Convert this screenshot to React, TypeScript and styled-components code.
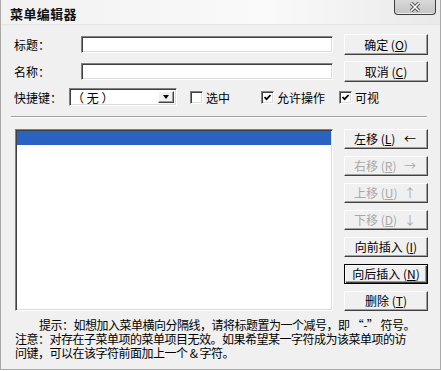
import React from "react"
import styled, { createGlobalStyle, css } from "styled-components"

const GlobalStyle = createGlobalStyle`
  html, body {
    margin: 0;
    padding: 0;
    background: #fff;
  }
  body {
    font-family: "Noto Sans CJK SC", "Liberation Sans", sans-serif;
    font-size: 12px;
    color: #000;
  }
`

export default function App() {
  return (
    <>
      <GlobalStyle />
      <Window>
        <TitleBar>
          <Title>菜单编辑器</Title>
          <CloseButton>
            <svg width="14" height="10" viewBox="0 0 14 10">
              <path d="M3 1 L11 9 M11 1 L3 9" stroke="#4a4a4a" strokeWidth="3.4" />
              <path d="M3 1 L11 9 M11 1 L3 9" stroke="#fff" strokeWidth="1.6" />
            </svg>
          </CloseButton>
        </TitleBar>

        <Client>
          <TopGrid>
            <FieldRow>
              <FieldLabel>标题：</FieldLabel>
              <TextInput />
            </FieldRow>
            <TopButton>
              确定 (<u>O</u>)
            </TopButton>

            <FieldRow>
              <FieldLabel>名称：</FieldLabel>
              <TextInput />
            </FieldRow>
            <TopButton>
              取消 (<u>C</u>)
            </TopButton>

            <OptionRow>
              <ShortcutLabel>快捷键：</ShortcutLabel>
              <Select>
                <SelectValue>（ 无 ）</SelectValue>
                <DropButton>
                  <Triangle />
                </DropButton>
              </Select>
              <CheckItem $w={71}>
                <CheckBox />
                <span>选中</span>
              </CheckItem>
              <CheckItem $w={78}>
                <CheckBox>
                  <CheckMark />
                </CheckBox>
                <span>允许操作</span>
              </CheckItem>
              <CheckItem>
                <CheckBox>
                  <CheckMark />
                </CheckBox>
                <span>可视</span>
              </CheckItem>
            </OptionRow>
          </TopGrid>

          <Separator />

          <MainGrid>
            <ListBox>
              <ListItem $selected />
            </ListBox>
            <ButtonColumn>
              <MoveButton>
                <span>
                  左移 (<u>L</u>)
                </span>
                <span>←</span>
              </MoveButton>
              <MoveButton disabled>
                <span>
                  右移 (<u>R</u>)
                </span>
                <span>→</span>
              </MoveButton>
              <MoveButton disabled>
                <span>
                  上移 (<u>U</u>)
                </span>
                <span>↑</span>
              </MoveButton>
              <MoveButton disabled>
                <span>
                  下移 (<u>D</u>)
                </span>
                <span>↓</span>
              </MoveButton>
              <Btn>
                向前插入 (<u>I</u>)
              </Btn>
              <Btn $default>
                向后插入 (<u>N</u>)
              </Btn>
              <Btn>
                删除 (<u>T</u>)
              </Btn>
            </ButtonColumn>
          </MainGrid>

          <Hint>
            <HintLine $indent>提示：如想加入菜单横向分隔线，请将标题置为一个减号，即 “-” 符号。</HintLine>
            <HintLine>注意：对存在子菜单项的菜单项目无效。如果希望某一字符成为该菜单项的访</HintLine>
            <HintLine>问键，可以在该字符前面加上一个 &amp; 字符。</HintLine>
          </Hint>
        </Client>
      </Window>
    </>
  )
}

const sunken = css`
  border: 1px solid;
  border-color: #808080 #ffffff #ffffff #808080;
  box-shadow: inset 1px 1px #404040, inset -1px -1px #dcdcdc;
`

const raised = css`
  border: 1px solid;
  border-color: #ffffff #404040 #404040 #ffffff;
  box-shadow: inset -1px -1px #a0a0a0;
`

const Window = styled.div`
  width: 441px;
  height: 370px;
  box-sizing: border-box;
  display: flex;
  flex-direction: column;
  background: #f0f0f0;
  border: 1px solid #a9a9a9;
  border-top: none;
  overflow: hidden;
`

const TitleBar = styled.div`
  height: 24px;
  flex-shrink: 0;
  display: flex;
  align-items: center;
  padding-left: 9px;
  background: linear-gradient(to right, #f1f1f1 0%, #fafafa 60%, #e9e9e9 100%);
  border-bottom: 1px solid #e4e4e4;
`

const Title = styled.div`
  font-size: 13px;
  font-weight: bold;
  letter-spacing: 0.4px;
  color: #111;
  margin-top: 2px;
`

const CloseButton = styled.div`
  margin-left: auto;
  margin-right: 4px;
  align-self: flex-start;
  width: 42px;
  height: 15px;
  box-sizing: border-box;
  display: flex;
  align-items: center;
  justify-content: center;
  background: linear-gradient(#d8d8d8, #c4c4c4);
  border: 1px solid #3d3d3d;
  border-top: none;
  border-radius: 0 0 4px 4px;
  box-shadow: inset 0 -1px #eeeeee;
`

const Client = styled.div`
  flex: 1;
  display: flex;
  flex-direction: column;
  padding: 9px 12px 0 13px;
`

const TopGrid = styled.div`
  display: grid;
  grid-template-columns: 1fr 84px;
  column-gap: 11px;
  row-gap: 6px;
`

const FieldRow = styled.div`
  height: 21px;
  display: flex;
  align-items: flex-start;
  padding-top: 2px;
  box-sizing: border-box;
`

const FieldLabel = styled.span`
  width: 67px;
  flex-shrink: 0;
  line-height: 17px;
  font-size: 12px;
`

const TextInput = styled.div`
  flex: 1;
  height: 17px;
  box-sizing: border-box;
  background: #fff;
  ${sunken};
`

const Btn = styled.button<{ $default?: boolean }>`
  width: 84px;
  height: 20px;
  box-sizing: border-box;
  padding: 0;
  display: flex;
  align-items: center;
  justify-content: center;
  font-family: inherit;
  font-size: 12px;
  line-height: 14px;
  background: #f0f0f0;
  color: ${(p) => (p.disabled ? "#a8a8a8" : "#000")};
  ${raised};
  u {
    text-underline-offset: 1px;
  }
  ${(p) =>
    p.$default &&
    css`
      border: 1px solid #000;
      box-shadow: inset 1px 1px #ffffff, inset -1px -1px #404040, inset -2px -2px #a0a0a0;
    `}
`

const TopButton = styled(Btn)`
  height: 21px;
`

const MoveButton = styled(Btn)`
  justify-content: space-between;
  padding: 0 11px 0 9px;
`

const OptionRow = styled.div`
  grid-column: 1 / -1;
  height: 18px;
  display: flex;
  align-items: center;
`

const ShortcutLabel = styled.span`
  width: 55px;
  flex-shrink: 0;
  font-size: 12px;
`

const Select = styled.div`
  width: 108px;
  height: 18px;
  box-sizing: border-box;
  display: flex;
  background: #fff;
  margin-right: 13px;
  padding: 2px;
  ${sunken};
`

const SelectValue = styled.span`
  flex: 1;
  font-size: 12px;
  line-height: 13px;
  white-space: pre;
`

const DropButton = styled.span`
  width: 16px;
  box-sizing: border-box;
  display: flex;
  align-items: center;
  justify-content: center;
  background: #f0f0f0;
  ${raised};
`

const Triangle = styled.span`
  width: 0;
  height: 0;
  border-left: 3.5px solid transparent;
  border-right: 3.5px solid transparent;
  border-top: 4px solid #000;
`

const CheckItem = styled.label<{ $w?: number }>`
  display: flex;
  align-items: center;
  gap: 3px;
  font-size: 12px;
  ${(p) => p.$w && `width: ${p.$w}px;`}
  flex-shrink: 0;
`

const CheckBox = styled.span`
  width: 13px;
  height: 13px;
  box-sizing: border-box;
  display: inline-flex;
  align-items: center;
  justify-content: center;
  background: #fff;
  ${sunken};
`

const CheckMark = () => (
  <svg width="7" height="7" viewBox="0 0 7 7">
    <path d="M0.5 3 L2.6 5.2 L6.5 1" fill="none" stroke="#000" strokeWidth="1.7" />
  </svg>
)

const Separator = styled.div`
  margin: 10px 1px 0 -3px;
  border-top: 1px solid #a0a0a0;
  border-bottom: 1px solid #ffffff;
`

const MainGrid = styled.div`
  margin-top: 11px;
  display: grid;
  grid-template-columns: 1fr 84px;
  column-gap: 11px;
`

const ListBox = styled.div`
  margin-left: 1px;
  height: 182px;
  box-sizing: border-box;
  background: #fff;
  padding: 1px;
  ${sunken};
`

const ListItem = styled.div<{ $selected?: boolean }>`
  height: 14px;
  background: ${(p) => (p.$selected ? "#2a62c1" : "transparent")};
`

const ButtonColumn = styled.div`
  display: flex;
  flex-direction: column;
  gap: 7px;
`

const Hint = styled.div`
  margin-top: 7px;
  padding-left: 1px;
  font-size: 12px;
  line-height: 14px;
  letter-spacing: -0.5px;
`

const HintLine = styled.div<{ $indent?: boolean }>`
  white-space: nowrap;
  ${(p) => p.$indent && "text-indent: 24px;"}
`
